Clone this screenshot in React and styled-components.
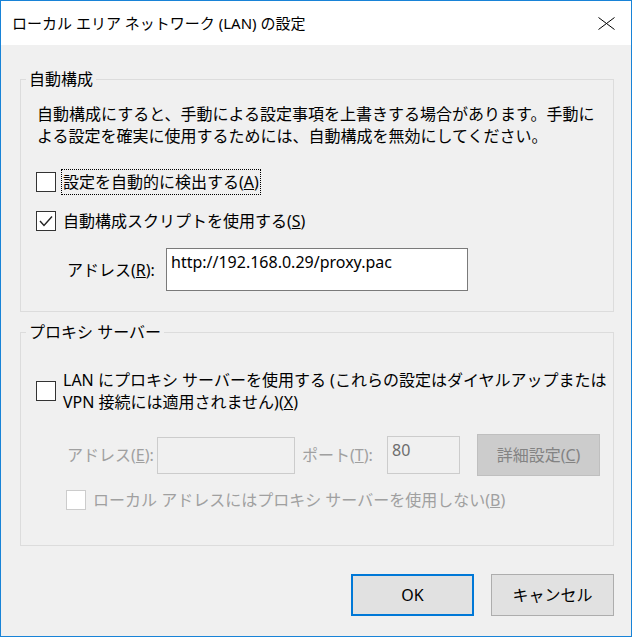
import React from 'react';
import styled, { createGlobalStyle } from 'styled-components';

const GlobalStyle = createGlobalStyle`
  html, body {
    margin: 0;
    padding: 0;
    background: #f0f0f0;
  }
  body {
    font-family: "Noto Sans", "Noto Sans CJK JP", sans-serif;
    font-size: 16px;
    color: #000;
  }
`;

const App = () => {
  return (
    <>
      <GlobalStyle />
      <Window>
        <TitleBar>
          <Title>ローカル エリア ネットワーク (LAN) の設定</Title>
          <CloseIcon width="17" height="13" viewBox="0 0 17 13">
            <path d="M0.5 0.5 L16.5 12.5 M16.5 0.5 L0.5 12.5" stroke="#000" strokeWidth="1" fill="none" />
          </CloseIcon>
        </TitleBar>

        <Body>
          <Group>
            <Legend>自動構成</Legend>
            <GroupBody $top={13} $bottom={20}>
              <Description>
                自動構成にすると、手動による設定事項を上書きする場合があります。手動に
                <br />
                よる設定を確実に使用するためには、自動構成を無効にしてください。
              </Description>

              <CheckRow $mt={22}>
                <CheckBox />
                <CheckLabel $focused>
                  設定を自動的に検出する(<u>A</u>)
                </CheckLabel>
              </CheckRow>

              <CheckRow $mt={13}>
                <CheckBox $checked>
                  <svg width="18" height="18" viewBox="0 0 18 18">
                    <polyline points="3,9 7,13.5 15,4.5" fill="none" stroke="#222" strokeWidth="1.4" />
                  </svg>
                </CheckBox>
                <CheckLabel>
                  自動構成スクリプトを使用する(<u>S</u>)
                </CheckLabel>
              </CheckRow>

              <FieldRow $mt={14} $indent={31}>
                <FieldLabel $width={99}>
                  アドレス(<u>R</u>):
                </FieldLabel>
                <TextBox $width={302} $height={43}>http://192.168.0.29/proxy.pac</TextBox>
              </FieldRow>
            </GroupBody>
          </Group>

          <Group $mt={9}>
            <Legend>プロキシ サーバー</Legend>
            <GroupBody $top={24} $bottom={32}>
              <CheckRow>
                <CheckBox />
                <CheckLabel>
                  LAN にプロキシ サーバーを使用する (これらの設定はダイヤルアップまたは
                  <br />
                  VPN 接続には適用されません)(<u>X</u>)
                </CheckLabel>
              </CheckRow>

              <FieldRow $mt={19} $indent={31}>
                <FieldLabel $width={90} $disabled>
                  アドレス(<u>E</u>):
                </FieldLabel>
                <TextBox $width={138} $height={37} $disabled />
                <FieldLabel $width={85} $disabled $ml={7}>
                  ポート(<u>T</u>):
                </FieldLabel>
                <TextBox $width={73} $height={38} $disabled>80</TextBox>
                <PushButton $width={123} $disabled $ml={17}>
                  詳細設定(<u>C</u>)
                </PushButton>
              </FieldRow>

              <CheckRow $mt={11} $indent={30}>
                <CheckBox $disabled />
                <CheckLabel $disabled>
                  ローカル アドレスにはプロキシ サーバーを使用しない(<u>B</u>)
                </CheckLabel>
              </CheckRow>
            </GroupBody>
          </Group>

          <Footer>
            <PushButton $width={123} $default>OK</PushButton>
            <PushButton $width={123}>キャンセル</PushButton>
          </Footer>
        </Body>
      </Window>
    </>
  );
};

export default App;

const Window = styled.div`
  box-sizing: border-box;
  width: 632px;
  height: 637px;
  border: 1px solid #1883d7;
  background: #f0f0f0;
  display: flex;
  flex-direction: column;
`;

const TitleBar = styled.div`
  height: 44px;
  flex-shrink: 0;
  background: #fff;
  display: flex;
  align-items: center;
  justify-content: space-between;
  padding: 0 16px 0 11px;
`;

const Title = styled.div`
  font-size: 15px;
  line-height: 22px;
  white-space: nowrap;
`;

const CloseIcon = styled.svg`
  display: block;
  margin-top: 1px;
`;

const Body = styled.div`
  flex: 1;
  display: flex;
  flex-direction: column;
  padding: 23px 17px 0 19px;
`;

const Group = styled.fieldset`
  margin: ${(p) => p.$mt || 0}px 0 0 0;
  padding: 0 0 0 5px;
  min-width: 0;
  border: 1px solid #dcdcdc;
`;

const Legend = styled.legend`
  padding: 0 3px;
  line-height: 22px;
  white-space: nowrap;
`;

const GroupBody = styled.div`
  display: flex;
  flex-direction: column;
  padding: ${(p) => p.$top}px 0 ${(p) => p.$bottom}px 10px;
`;

const Description = styled.div`
  padding-left: 1px;
  line-height: 22px;
  white-space: nowrap;
`;

const CheckRow = styled.div`
  display: flex;
  align-items: center;
  margin-top: ${(p) => p.$mt || 0}px;
  padding-left: ${(p) => p.$indent || 0}px;
`;

const CheckBox = styled.span`
  box-sizing: border-box;
  width: 20px;
  height: 20px;
  flex-shrink: 0;
  display: flex;
  align-items: center;
  justify-content: center;
  background: #fff;
  border: 1px solid ${(p) => (p.$disabled ? '#cccccc' : '#333333')};
`;

const CheckLabel = styled.span`
  margin-left: 5px;
  padding: 1px;
  line-height: 22px;
  white-space: nowrap;
  color: ${(p) => (p.$disabled ? '#a0a0a0' : '#000')};
  border: 1px dotted ${(p) => (p.$focused ? '#000' : 'transparent')};
`;

const FieldRow = styled.div`
  display: flex;
  align-items: center;
  margin-top: ${(p) => p.$mt || 0}px;
  padding-left: ${(p) => p.$indent || 0}px;
`;

const FieldLabel = styled.span`
  width: ${(p) => p.$width}px;
  margin-left: ${(p) => p.$ml || 0}px;
  flex-shrink: 0;
  line-height: 22px;
  white-space: nowrap;
  color: ${(p) => (p.$disabled ? '#a0a0a0' : '#000')};
`;

const TextBox = styled.div`
  box-sizing: border-box;
  width: ${(p) => p.$width}px;
  height: ${(p) => p.$height}px;
  flex-shrink: 0;
  padding: 2px 4px;
  line-height: 22px;
  background: ${(p) => (p.$disabled ? '#f0f0f0' : '#fff')};
  border: 1px solid ${(p) => (p.$disabled ? '#cccccc' : '#7a7a7a')};
  color: ${(p) => (p.$disabled ? '#6d6d6d' : '#000')};
  white-space: nowrap;
`;

const PushButton = styled.button`
  box-sizing: border-box;
  width: ${(p) => p.$width}px;
  height: 42px;
  margin-left: ${(p) => p.$ml || 0}px;
  flex-shrink: 0;
  padding: 0;
  font-family: inherit;
  font-size: 16px;
  line-height: 22px;
  color: ${(p) => (p.$disabled ? '#838383' : '#000')};
  background: ${(p) => (p.$disabled ? '#cccccc' : '#e1e1e1')};
  border: ${(p) =>
    p.$default ? '2px solid #0078d7' : p.$disabled ? '1px solid #bfbfbf' : '1px solid #adadad'};
  border-radius: 0;
`;

const Footer = styled.div`
  display: flex;
  justify-content: flex-end;
  gap: 17px;
  margin-top: 28px;
`;
